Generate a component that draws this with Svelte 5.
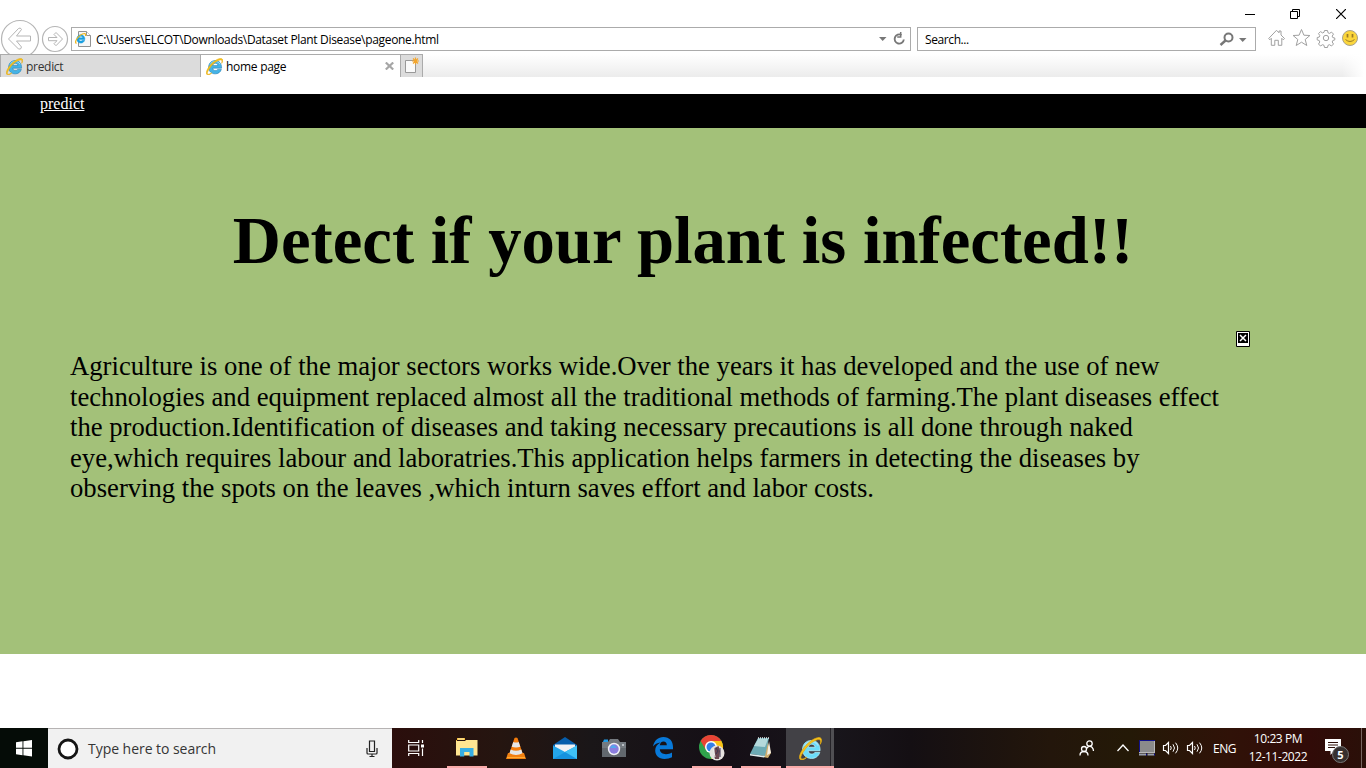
<script>
  const lines = [
    'Agriculture is one of the major sectors works wide.Over the years it has developed and the use of new',
    'technologies and equipment replaced almost all the traditional methods of farming.The plant diseases effect',
    'the production.Identification of diseases and taking necessary precautions is all done through naked',
    'eye,which requires labour and laboratries.This application helps farmers in detecting the diseases by',
    'observing the spots on the leaves ,which inturn saves effort and labor costs.'
  ];
</script>

{#snippet ie(size, light)}
  <svg class="ie" width={size} height={size} viewBox="0 0 24 24">
    <path d="M22 14.300H9.500c.2 2.100 1.600 3.500 3.700 3.500 1.500 0 2.600-.5 3.300-1.700h5.200c-1.300 4-4.500 6.300-8.700 6.300-5.400 0-9.300-3.800-9.300-9.300 0-5.600 3.900-9.500 9.300-9.500 5.700 0 9.200 4.200 9 10.700ZM9.500 10.700h7.300c-.2-2-1.600-3.200-3.600-3.200s-3.300 1.200-3.700 3.200Z" fill={light ? '#6cdcf8' : '#45b4e6'} stroke={light ? '#b5f2fc' : '#227eb4'} stroke-width=".8" />
    <path d="M5.800 9.500C7.300 6.200 9.800 4.800 13 4.800c3 0 5.500 1.500 6.800 4" fill="none" stroke="#a4e5fb" stroke-width="1.200" />
    <path d="M4.600 15.500C1.400 20 1 23 3.200 23c1.300 0 3.200-.8 5-2-2.500 2.800-6.200 3.600-7.300 1.900C-.8 20 3.300 12 9.500 6.500 15 1.500 21.300-.8 23 1.500c.9 1.300.5 3.600-.8 6.100.6-2.600.5-4.200-.6-4.700-2.100-1-7.500 1.700-11.800 5.900-2 2-3.900 4.400-5.200 6.700Z" fill="#f8c51c" stroke="#e3aa12" stroke-width=".8" />
  </svg>
{/snippet}

{#snippet speaker()}
  <svg width="18" height="16" viewBox="0 0 18 16" fill="none" stroke="#fff">
    <path d="M1.500 5.500h2L6.500 2.500v11l-3-3h-2Z" stroke-width="1.200" />
    <path d="M8.500 6q1.500 2 0 4M11 4.300q3 3.700 0 7.400M13.500 2.700q4.500 5.300 0 10.600" />
  </svg>
{/snippet}

<div class="screen">
  <header>
    <div class="caption">
      <svg width="10" height="10" viewBox="0 0 10 10"><path d="M0 5.500h10" stroke="#000" /></svg>
      <svg width="10" height="10" viewBox="0 0 10 10" fill="none" stroke="#000"><path d="M.5 2.500h7v7h-7ZM2.500 2.500v-2h7v7h-2" /></svg>
      <svg width="10" height="10" viewBox="0 0 10 10"><path d="m0 0 10 10M10 0 0 10" stroke="#000" stroke-width="1.200" /></svg>
    </div>
    <div class="toolbar">
      <svg class="nav" width="71" height="35" viewBox="0 0 71 35" fill="none" stroke="#b5b5b5">
        <circle cx="20" cy="20" r="18.500" stroke-width="1.200" />
        <path d="m8.500 20 10-10.500q2-1.500 3 1l-5 6.500H30.500v5h-14l5 6q-.5 3-3 2Z" />
        <circle cx="55" cy="20" r="12.500" stroke-width="1.200" />
        <path d="m62.500 20-6.500-6.500-2 2 3 3h-8.500v3.200H57l-3 3 2 2Z" />
      </svg>
      <div class="field address">
        <svg width="17" height="18" viewBox="0 0 17 18">
          <path d="M3.500 1.500h8l4 4v11h-12Z" fill="#f7f7f7" stroke="#929292" />
          <path d="M11.500 1.500v4h4" fill="#fff" stroke="#929292" />
          <g transform="translate(-.5 2.500) scale(.5)">
            <path d="M21 13.800H9.200c.2 2.100 1.600 3.300 3.500 3.300 1.400 0 2.300-.6 3-1.700h4.600c-1.200 3.500-4 5.800-7.700 5.800-4.600 0-7.900-3.700-7.900-8.400 0-4.800 3.300-8.200 7.900-8.200 4.900 0 8 3.600 8.400 9.200ZM9.300 10.700h6.900c-.2-1.900-1.500-3-3.400-3-1.900 0-3.200 1.100-3.500 3Z" fill="#199fe0" stroke="#199fe0" />
            <path d="M4 22C-2 20 8 4 20 2q3 0 2 5" fill="none" stroke="#eeb51c" stroke-width="2.500" />
          </g>
        </svg>
        <span class="url">C:\Users\ELCOT\Downloads\Dataset Plant Disease\pageone.html</span>
        <svg class="end" width="32" height="16" viewBox="0 0 32 16">
          <path d="M3 6h7.500L6.700 10Z" fill="#777" />
          <path d="M25.500 4a4.600 4.600 0 1 0 2.300 4.500" fill="none" stroke="#777" stroke-width="1.900" />
          <path d="M24.700 1v5h-3.500" fill="none" stroke="#777" stroke-width="1.500" />
        </svg>
      </div>
      <div class="field search">
        <span class="hint">Search...</span>
        <svg class="end" width="32" height="16" viewBox="0 0 32 16">
          <circle cx="10.500" cy="6.500" r="4" fill="none" stroke="#777" stroke-width="2" />
          <path d="m7.500 9.500-5 4.500" stroke="#777" stroke-width="2.400" />
          <path d="M21 7h7.500l-3.800 4Z" fill="#777" />
        </svg>
      </div>
      <svg class="tools" width="98" height="20" viewBox="0 0 98 20" fill="none" stroke="#a0a0a0">
        <path d="M.7 10.500 8.500 2.300l2.500 2.500V3h2v4l3.500 3.500-1.200 1.300-1.500-1.500v7h-3.500v-5H6.800v5H3.300v-7l-1.500 1.500Z" />
        <g transform="translate(8 0)">
          <path d="m25.500 1.500 2.400 5.700 6 .3-4.700 4 1.600 6-5.300-3.300-5.300 3.300 1.600-6-4.700-4 6-.3Z" />
          <path d="m48.500 2.500 3 0 .5 2.300 1.500.6 2-1.300 2 2-1.300 2 .6 1.500 2 .4v1.900l-2 .6-.6 1.500 1.300 2-2 2-2-1.300-1.500.6-.5 2.200h-3l-.5-2.200-1.500-.6-2 1.300-2-2 1.300-2-.6-1.500-2-.6V9.500l2-.4.6-1.500-1.300-2 2-2 2 1.300 1.500-.6Z" />
          <circle cx="50" cy="10" r="2.700" />
          <circle cx="74" cy="10" r="7.500" fill="#fbd63c" stroke="#a9a28b" />
          <path d="M71.500 6v3.500M76.500 6v3.500" stroke="#9b7b27" stroke-width="1.700" />
          <path d="M69.500 11.500q4.500 4 9 0" stroke="#9b7b27" />
        </g>
      </svg>
    </div>
    <div class="tabs">
      <div class="tab idle">{@render ie(17, false)}<span class="t1">predict</span></div>
      <div class="tab active">
        {@render ie(17, false)}<span class="t2">home page</span>
        <svg class="close" width="9" height="8" viewBox="0 0 9 8"><path d="m.8.5 7.400 7M8.200.5.8 7.500" stroke="#a6a6a6" stroke-width="2.200" /></svg>
      </div>
      <div class="newtab">
        <svg width="20" height="20" viewBox="0 0 20 20">
          <path d="M4.500 5.500h10v12h-10Z" fill="#fafafa" stroke="#999" />
          <path d="M14.500 2.500v7M11 6h7M12 3.500l5 5M17 3.500l-5 5" stroke="#f3a52c" stroke-width="1.200" />
        </svg>
      </div>
    </div>
  </header>

  <nav><a href="#predict">predict</a></nav>
  <main>
    <h1>Detect if your plant is infected!!</h1>
    <div class="missing">
      <svg width="14" height="16" viewBox="0 0 14 16">
        <path d="M.5.500h13v15H.5Z" fill="#fff" stroke="#000" />
        <path d="M2 2h10v10H2Z" />
        <path d="m4 4 6 6M10 4l-6 6" stroke="#fff" stroke-width="1.500" />
      </svg>
    </div>
    <p>{#each lines as line}<span>{line}</span>{/each}</p>
  </main>

  <footer>
    <div class="start">
      <svg width="16" height="17" viewBox="0 0 16 17" fill="#fff"><path d="M0 2.200 6.500 1.300v6.500H0ZM7.400 1.200 16 0v7.800H7.400ZM0 8.800h6.500v6.400L0 14.300ZM7.400 8.800H16v7.700l-8.600-1.200Z" /></svg>
    </div>
    <div class="cortana">
      <svg width="22" height="22" viewBox="0 0 22 22"><circle cx="11" cy="11" r="9" fill="#fff" stroke="#151515" stroke-width="2.800" /></svg>
      <span class="type">Type here to search</span>
      <svg class="mic" width="12" height="18" viewBox="0 0 12 18" fill="none" stroke="#222" stroke-width="1.200"><path d="M3.500 1h5v10.500h-5ZM1 8v5q0 1 1 1h8q1 0 1-1V8M6 14v2.500M3.500 16.500h5" /></svg>
    </div>
    <div class="apps">
      <div class="app view">
        <svg width="17" height="16" viewBox="0 0 17 16" fill="none" stroke="#fff" stroke-width="1.200"><path d="M.7 0v2.500h10V0M.7 16v-2.500h10V16M.7 5h10v6H.7ZM14.500 0v3M14.500 8.500V16" /><path d="M13 4.500h3v3h-3Z" fill="#fff" stroke="none" /></svg>
      </div>
      <div class="app run">
        <svg width="22" height="20" viewBox="0 0 22 20"><path d="M0 2h9V0H1v3H0Z" fill="#f2b936" /><path d="M0 3h9l1-1h11.500v15.500H0Z" fill="#ffe592" /><path d="M2 1h6" stroke="#fff1bf" /><path d="M4 10h13.500v8.500h-4V14h-5.300v4.500H4Z" fill="#37aee4" /></svg>
      </div>
      <div class="app">
        <svg width="20" height="23" viewBox="0 0 20 23"><path d="m2 16-2 6h20l-2-6Z" fill="#f18010" /><path d="m8.500 1-5.300 16q6.800 4 13.600 0L11.500 1q-1.500-1-3 0Z" fill="#f47c0c" /><path d="m7.300 5-1.600 4.700q4.300 1.500 8.600 0L12.700 5q-2.700 1-5.400 0ZM4.700 12.500l-1.200 3.700q6.500 3.500 13 0l-1.200-3.700q-5.300 2.500-10.600 0Z" fill="#e5e6e6" /><path d="M1 20.500h18" stroke="#ffab31" /></svg>
      </div>
      <div class="app">
        <svg width="24" height="23" viewBox="0 0 24 23"><path d="M0 8 12 0l12 8v4H0Z" fill="#075eac" /><path d="M2 7.500h20v8H2Z" fill="#f2f2f4" /><path d="M0 8.500 12 15l12-6.500V22H0Z" fill="#24a6eb" /><path d="m0 22 16-9 8 9Z" fill="#1592df" /><path d="m12 15 12-6.500V22Z" fill="#3fc0f4" /></svg>
      </div>
      <div class="app">
        <svg width="24" height="20" viewBox="0 0 24 20"><path d="M0 4h6l2-3h8l2 3h6v15H0Z" fill="#747a80" /><path d="M0 10h24v9H0Z" fill="#62686e" /><path d="M2 1.500h4V4H1Z" fill="#209be6" /><circle cx="12" cy="11" r="6.200" fill="#eef0f4" /><circle cx="12" cy="11" r="4.700" fill="#8b7ddd" /><path d="M8 10q3-6 7 0Z" fill="#51a8ee" /><path d="M20 6h2v2h-2Z" fill="#b9bec4" /></svg>
      </div>
      <div class="app">
        <svg width="20" height="22" viewBox="0 0 20 22"><path d="M0 9.500C1.300 3.500 5 0 10.400 0 16.500 0 20 4.200 20 10v2.300H6.800c.3 3.300 2.800 4.900 6.200 4.900 2.200 0 4.200-.6 6-1.700v4.700q-3.200 1.800-7.500 1.800C5.600 22 2.200 18.400 2.200 13.600c0-3.500 2-6.400 5.300-8C4.200 6 1.700 7.400 0 9.500Zm6.800-1.200h7c0-2.400-1.200-3.700-3.400-3.700-2 0-3.200 1.400-3.600 3.700Z" fill="#0879d9" /></svg>
      </div>
      <div class="app run">
        <svg width="26" height="26" viewBox="0 0 26 26"><circle cx="12" cy="12" r="12" fill="#30a24c" /><path d="M1.600 6A12 12 0 0 1 22.400 6H12l-5 9Z" fill="#e84335" /><path d="M12 6h10.400A12 12 0 0 1 12 24l6-9Z" fill="#fbc116" /><circle cx="12" cy="12" r="6" fill="#fff" /><circle cx="12" cy="12" r="4.500" fill="#347ee8" /><circle cx="18" cy="18" r="7.500" fill="#e4e1de" /><path d="m15.500 13 4-2 1.500 5-1 8h-4l-1-4Z" fill="#6c4651" /><path d="m17 13 2 3-2 3M21 13v9" stroke="#3d3551" fill="none" /><path d="m14.500 14 1.500 8" stroke="#f1eeee" /></svg>
      </div>
      <div class="app run note">
        <svg width="24" height="24" viewBox="0 0 24 24"><path d="m18 4 4 13-3 5-5-1Z" fill="#d0ad6d" /><path d="m20 5 2 12-4 2Z" fill="#f4eee1" /><path d="M9 2h11l-4 18-15-2Z" fill="#6caab4" /><path d="M9 3h10l-3 8-11-1Z" fill="#b5d9dc" /><path d="m1 18 15 2-1 1.500-14-2Z" fill="#e0eef0" /><path d="M9 2h11" stroke="#e5e9e9" stroke-width="1.500" stroke-dasharray="1 1" /></svg>
      </div>
      <div class="app run current">{@render ie(23, true)}</div>
    </div>
    <div class="tray">
      <svg class="people" width="16" height="16" viewBox="0 0 16 16" fill="none" stroke="#fff" stroke-width="1.300"><circle cx="10.500" cy="3.500" r="2.700" /><path d="M7.500 8.500q3-3.500 5.500-1.200Q14.500 9 14.500 11" /><circle cx="5" cy="9" r="2.500" /><path d="M1 15.500q0-4 4-4t4 4" /></svg>
      <svg class="up" width="12" height="8" viewBox="0 0 12 8" fill="none" stroke="#fff" stroke-width="1.300"><path d="m.5 7 5.500-6 5.500 6" /></svg>
      <svg class="pad" width="16" height="16" viewBox="0 0 16 16"><path d="M0 0h16v13H0Z" fill="#8b8b8b" /><path d="M0 .5h16M.5 0v12" stroke="#11118a" /><path d="M0 12.500h16M15.500 1v12" stroke="#b8b8b8" /><path d="M0 14.500h7M8.500 14.500h7" stroke="#999fae" stroke-width="2" /><path d="M7.500 13.500v2M15.500 13.500v2" stroke="#11118a" /></svg>
      <span class="snd">{@render speaker()}</span>
      <span class="snd two">{@render speaker()}</span>
      <span class="lang">ENG</span>
      <div class="clock"><span class="time">10:23 PM</span><span class="date">12-11-2022</span></div>
      <div class="notice">
        <svg width="16" height="16" viewBox="0 0 16 16"><path d="M0 0h16v12H9l-3.500 4v-4H0Z" fill="#fff" /><path d="M3 3.500h10M3 6h10M3 8.500h7" stroke="#301009" /></svg>
        <b>5</b>
      </div>
      <div class="desk"></div>
    </div>
  </footer>
</div>

<style>
  :global(body) { margin: 0; background: #fff; overflow: hidden; }
  .screen { width: 1366px; height: 768px; display: flex; flex-direction: column; overflow: hidden; background: #fff; font-family: "Open Sans", "Noto Sans", sans-serif; }
  svg { display: block; flex: none; }
  span { white-space: nowrap; }
  header { height: 94px; flex: none; }
  .caption { height: 19px; box-sizing: border-box; padding: 9px 20px 0 0; display: flex; justify-content: flex-end; gap: 36px; }
  .caption svg:first-child { margin-right: -1px; }
  .toolbar { height: 35px; display: flex; align-items: flex-start; overflow: hidden; }
  .field { box-sizing: border-box; height: 24px; margin-top: 8px; border: 1px solid #ababab; background: #fff; display: flex; align-items: center; color: #000; font-size: 12px; }
  .address { width: 840px; padding: 0 0 0 3px; }
  .search { width: 339px; margin-left: 6px; padding-left: 7px; }
  .end { margin-left: auto; }
  .address .end { margin-right: 2px; }
  .search .end { margin-right: 5px; }
  .url { margin-left: 4px; letter-spacing: -.33px; }
  .hint { letter-spacing: -.4px; }
  .tools { margin: 9px 0 0 12px; }
  .tabs { height: 23px; display: flex; background: linear-gradient(90deg, transparent 1342px, #fff 1364px), linear-gradient(#fff, #ececec); font-size: 12px; }
  .tab { box-sizing: border-box; display: flex; align-items: center; border-top: 1px solid #ababab; border-right: 1px solid #ababab; }
  .idle { width: 201px; padding-left: 5px; border-left: 1px solid #ababab; background: #dcdcdc; color: #333; }
  .active { width: 200px; padding-left: 5px; background: #fff; }
  .tab span { margin-left: 3px; }
  .t1 { letter-spacing: -.3px; }
  .t2 { letter-spacing: -.28px; }
  .close { margin: 0 6px 0 auto; }
  .newtab { box-sizing: border-box; width: 22px; border: solid #ababab; border-width: 1px 1px 0 0; background: #dcdcdc; }
  nav { height: 34px; flex: none; background: #000; padding-left: 40px; font: 16px/20px "Liberation Serif", serif; }
  nav a { color: #fff; }
  main { height: 526px; flex: none; background: #a3c179; font-family: "Liberation Serif", serif; color: #000; }
  h1 { margin: 0; padding-top: 75px; font-size: 66.67px; line-height: 76px; text-align: center; white-space: nowrap; }
  .missing { height: 16px; padding: 52px 0 0 1236px; }
  p { margin: 4px 0 0 70px; font-size: 26.68px; line-height: 30.6px; }
  p span { display: block; width: max-content; }
  footer { margin-top: auto; height: 40px; flex: none; display: flex; color: #fff; background: linear-gradient(90deg, #050c07 0, #050c07 48px, #2b0e0c 392px, #251510 500px, #1a1618 590px, #150f16 730px, #18151b 835px, #140f13 910px, #23160b 1050px, #241907 1130px, #301208 1230px, #310b08 1310px, #2a1009); }
  .start { width: 48px; display: flex; align-items: center; justify-content: center; }
  .cortana { box-sizing: border-box; width: 344px; border-top: 1px solid #b6b3b3; background: #f1f1f1; display: flex; align-items: center; padding: 0 14px 0 9px; }
  .type { margin-left: 9px; font-size: 14px; color: #353535; letter-spacing: -.04px; }
  .mic { margin-left: auto; }
  .apps { display: flex; }
  .app { box-sizing: border-box; width: 49px; height: 40px; display: flex; align-items: center; justify-content: center; }
  .view { width: 50px; padding-right: 2px; }
  .run { background: linear-gradient(#f9aaa9, #f9aaa9) center bottom / 40px 2px no-repeat; }
  .current { width: 48px; margin-left: 1px; background: linear-gradient(#f9aaa9, #f9aaa9) center bottom / 48px 2px no-repeat, linear-gradient(90deg, #424146 44px, #252328 44px, #252328 45px, #504f53 45px); }
  .tray { margin-left: auto; display: flex; align-items: center; height: 40px; font-size: 12px; }
  .up { margin-left: 22px; }
  .pad { margin-left: 10px; }
  .snd { margin-left: 7px; }
  .two { margin-left: 6px; }
  .lang { width: 24px; margin-left: 9px; letter-spacing: -.5px; }
  .clock { width: 60px; margin-left: 11px; display: flex; flex-direction: column; align-items: center; line-height: 18px; padding-bottom: 1px; }
  .time { letter-spacing: -.4px; }
  .date { letter-spacing: -.42px; }
  .notice { position: relative; width: 24px; height: 24px; margin: 6px 0 0 17px; }
  .notice b { position: absolute; left: 7px; top: 7px; width: 15px; height: 15px; border: 1px solid #777; border-radius: 50%; background: #37302f; font-size: 11px; line-height: 15px; text-align: center; }
  .desk { width: 4px; height: 40px; margin-left: 12px; border-left: 1px solid #776560; }
</style>
